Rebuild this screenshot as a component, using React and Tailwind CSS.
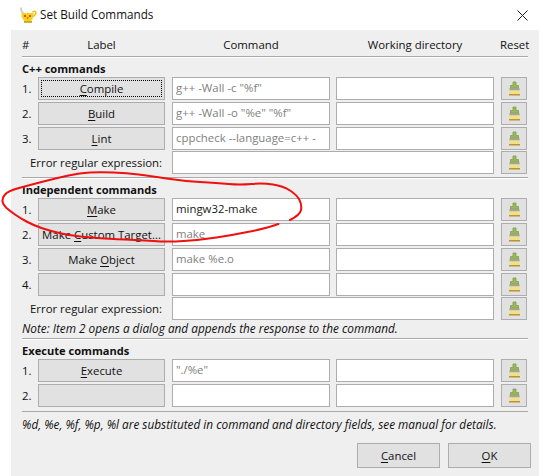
const font = "font-['Open_Sans','Noto_Sans',sans-serif]";

// traced from the marker line in the screenshot
const circlePoints = [
  [290, 220], [300, 215], [302, 205], [297, 195], [283, 186], [263, 183], [240, 185], [217, 183],
  [183, 181], [150, 176], [127, 173], [100, 172], [80, 173], [57, 178], [30, 185], [8, 191],
  [2, 198], [3, 205], [10, 211], [20, 218], [33, 225], [50, 231], [73, 236], [110, 239],
  [140, 240], [167, 242], [200, 240], [233, 235], [267, 228], [290, 220],
];

function smoothPath(pts) {
  let d = `M${pts[0][0]} ${pts[0][1]}`;
  for (let i = 1; i < pts.length - 1; i++) {
    const mx = (pts[i][0] + pts[i + 1][0]) / 2;
    const my = (pts[i][1] + pts[i + 1][1]) / 2;
    d += `Q${pts[i][0]} ${pts[i][1]} ${mx} ${my}`;
  }
  return d;
}

function U({ text, at }) {
  // underlined mnemonic letter
  return (
    <>
      {text.slice(0, at)}
      <span className="underline underline-offset-2">{text[at]}</span>
      {text.slice(at + 1)}
    </>
  );
}

function BrushIcon() {
  return (
    <svg width="13" height="16" viewBox="0 0 13 16">
      <path d="M5 1h3v3.500h2.500V7h-8V4.500H5z" fill="#9cb85c" stroke="#7fa04a" strokeWidth="0.800" />
      <rect x="1.500" y="7" width="10" height="2.500" fill="#a3a58f" />
      <rect x="1.500" y="9.500" width="10" height="3.500" fill="#f0e184" />
      <rect x="1" y="13" width="11" height="1.500" fill="#bd9238" />
    </svg>
  );
}

function GeanyIcon() {
  return (
    <svg width="17" height="18" viewBox="0 0 17 18">
      <path d="M1.500 1.500C0.500 4 1.500 6 3.500 7" fill="none" stroke="#c9c9c9" strokeWidth="1.600" />
      <path d="M12.500 6c3-1.500 4-0.500 3 2-0.500 1.500-2 2.500-3.500 3" fill="none" stroke="#e6c01f" strokeWidth="1.500" />
      <path d="M1.500 7.500C3 6 5 8 7.500 6.500 10 8 12 6 13.500 7c0.500 3-0.500 6.500-2.500 8H4.500C2.500 13.500 1 10.500 1.500 7.500z" fill="#f2d21f" />
      <rect x="4" y="15" width="8" height="1.800" fill="#c9a516" />
      <circle cx="5" cy="10" r="1.100" fill="#d8322a" />
      <circle cx="10" cy="10" r="1.100" fill="#d8322a" />
      <path d="M6.500 11.500h2.500L7.700 13z" fill="#b5451f" />
    </svg>
  );
}

function LabelButton({ children, focused }) {
  return (
    <button className="relative w-[127px] h-[23px] shrink-0 border border-[#adadad] bg-[#e1e1e1] text-center whitespace-nowrap">
      {focused && <span className="absolute inset-[2px] border border-dotted border-black" />}
      {children}
    </button>
  );
}

function Field({ value, placeholder, className }) {
  return (
    <div className={`h-[23px] border border-[#adadad] bg-white pl-[3px] overflow-hidden whitespace-nowrap leading-[20px] ${className} ${placeholder ? "text-[#808080]" : "text-[#1a1a1a]"}`}>
      {value || placeholder}
    </div>
  );
}

function ResetButton() {
  return (
    <button className="flex items-center justify-center w-[26px] h-[23px] shrink-0 border border-[#adadad] bg-[#e1e1e1]">
      <BrushIcon />
    </button>
  );
}

function Row({ num, label, value, placeholder, focused }) {
  return (
    <div className="flex items-center h-[23px]">
      <span className="w-[16px] shrink-0">{num}.</span>
      <LabelButton focused={focused}>{label}</LabelButton>
      <Field value={value} placeholder={placeholder} className="w-[158px] ml-[7px] shrink-0" />
      <Field className="w-[158px] ml-[6px] shrink-0" />
      <div className="ml-[7px]"><ResetButton /></div>
    </div>
  );
}

function ErrorRow() {
  return (
    <div className="flex items-center h-[23px] mt-px">
      <span className="w-[150px] shrink-0 pl-[8px] whitespace-nowrap">Error regular expression:</span>
      <Field className="w-[322px] shrink-0" />
      <div className="ml-[7px]"><ResetButton /></div>
    </div>
  );
}

function Section({ title, children }) {
  return (
    <>
      <div className="h-[19px] leading-[22px] font-bold text-[11.100px] whitespace-nowrap">{title}</div>
      <div className="flex flex-col gap-[2px]">{children}</div>
    </>
  );
}

export default function App() {
  return (
    <div className={`relative w-[539px] h-[476px] bg-white text-[11.400px] text-[#111] overflow-hidden ${font}`}>
      <div className="flex items-center h-[30px] pl-[20px]">
        <GeanyIcon />
        <span className="ml-[3px] text-[11.700px]">Set Build Commands</span>
        <svg className="ml-auto mr-[11px]" width="11" height="11" viewBox="0 0 11 11">
          <path d="M0.500 0.500l10 10M10.500 0.500l-10 10" stroke="#222" strokeWidth="1" />
        </svg>
      </div>

      <div className="h-[446px] ml-[11px] bg-[#efefef] pl-[11px] pr-[11px]">
        <div className="flex items-center h-[27px] pt-[4px] border-b border-[#a9a9a9] whitespace-nowrap">
          <span className="w-[16px] shrink-0">#</span>
          <span className="w-[127px] shrink-0 text-center">Label</span>
          <span className="w-[158px] ml-[7px] shrink-0 text-center">Command</span>
          <span className="w-[158px] ml-[6px] shrink-0 text-center">Working directory</span>
          <span className="ml-[6px]">Reset</span>
        </div>

        <div className="h-px bg-white" />
        <Section title="C++ commands">
          <Row num="1" focused label={<U text="Compile" at={0} />} placeholder={'g++ -Wall -c "%f"'} />
          <Row num="2" label={<U text="Build" at={0} />} placeholder={'g++ -Wall -o "%e" "%f"'} />
          <Row num="3" label={<U text="Lint" at={0} />} placeholder="cppcheck --language=c++ -" />
        </Section>
        <ErrorRow />
        <div className="h-px bg-[#a9a9a9] mt-[3px]" />

        <div className="h-px bg-white" />
        <Section title="Independent commands">
          <Row num="1" label={<U text="Make" at={0} />} value="mingw32-make" />
          <Row num="2" label={<U text="Make Custom Target..." at={5} />} placeholder="make" />
          <Row num="3" label={<U text="Make Object" at={5} />} placeholder="make %e.o" />
          <Row num="4" />
        </Section>
        <ErrorRow />
        <div className="h-[18px] leading-[17px] italic text-[11.800px] whitespace-nowrap">Note: Item 2 opens a dialog and appends the response to the command.</div>
        <div className="h-px bg-[#a9a9a9]" />

        <div className="h-px bg-white" />
        <Section title="Execute commands">
          <Row num="1" label={<U text="Execute" at={0} />} placeholder={'"./%e"'} />
          <Row num="2" />
        </Section>
        <div className="h-px bg-[#a9a9a9] mt-[4px]" />
        <div className="h-[25px] leading-[25px] italic text-[11.800px] whitespace-nowrap">%d, %e, %f, %p, %l are substituted in command and directory fields, see manual for details.</div>

        <div className="flex justify-end gap-[8px] mt-[6px] -mr-[3px]">
          <button className="w-[83px] h-[25px] border border-[#adadad] bg-[#e1e1e1]"><U text="Cancel" at={0} /></button>
          <button className="w-[83px] h-[25px] border border-[#adadad] bg-[#e1e1e1]"><U text="OK" at={0} /></button>
        </div>
      </div>

      {/* red marker circle drawn over the dialog */}
      <svg className="absolute left-0 top-0 pointer-events-none" width="539" height="476" viewBox="0 0 539 476">
        <path d={smoothPath(circlePoints)} fill="none" stroke="#f01010" strokeWidth="2" strokeLinecap="round" />
      </svg>
    </div>
  );
}
